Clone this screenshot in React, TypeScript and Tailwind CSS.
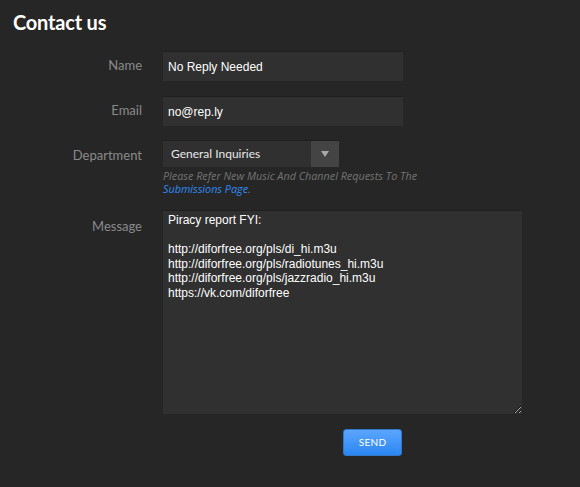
import React from "react";

const labelCls =
  "w-[142px] shrink-0 text-right text-[13px] text-[#8a8a8a] font-['Lato','Noto_Sans',sans-serif]";

const fieldCls =
  "ml-[21px] w-[240px] h-[30px] bg-[#303030] border-t border-[#1f1f1f] pl-[5px] text-[12px] text-white outline-none";

export default function App() {
  return (
    <div className="w-[580px] h-[487px] bg-[#262626] overflow-hidden font-['Liberation_Sans',Arial,sans-serif]">
      <h1 className="pl-[13px] pt-[10px] text-[20px] leading-[24px] font-bold text-white font-['Lato','Noto_Sans',sans-serif] tracking-[-0.2px]">
        Contact us
      </h1>

      <form className="mt-[17px] flex flex-col">
        <div className="flex items-center h-[30px]">
          <label className={labelCls}>Name</label>
          <input defaultValue="No Reply Needed" className={fieldCls} />
        </div>

        <div className="flex items-center h-[30px] mt-[15px]">
          <label className={labelCls}>Email</label>
          <input defaultValue="no@rep.ly" className={fieldCls} />
        </div>

        <div className="flex mt-[14px]">
          <label className={`${labelCls} pt-[6px]`}>Department</label>
          <div className="ml-[21px] flex flex-col">
            <div className="flex w-[176px] h-[27px] bg-[#303030] border-t border-[#1f1f1f]">
              <span className="flex-1 pl-[8px] leading-[26px] text-[12px] text-[#e8e8e8] font-['Lato','Noto_Sans',sans-serif]">
                General Inquiries
              </span>
              <span className="w-[28px] flex items-center justify-center bg-[#444444]">
                <svg width="8" height="6" viewBox="0 0 8 6">
                  <path d="M0 0h8L4 6z" fill="#a8a8a8" />
                </svg>
              </span>
            </div>
            <p className="mt-[3px] text-[10.8px] leading-[12.5px] italic text-[#747474] font-['Open_Sans','Noto_Sans',sans-serif]">
              Please Refer New Music And Channel Requests To The
              <br />
              <a className="text-[#2f8cf5]">Submissions Page</a>.
            </p>
          </div>
        </div>

        <div className="flex mt-[15px]">
          <label className={`${labelCls} pt-[7px]`}>Message</label>
          <textarea
            defaultValue={
              "Piracy report FYI:\n\nhttp://diforfree.org/pls/di_hi.m3u\nhttp://diforfree.org/pls/radiotunes_hi.m3u\nhttp://diforfree.org/pls/jazzradio_hi.m3u\nhttps://vk.com/diforfree"
            }
            className="ml-[21px] w-[359px] h-[204px] bg-[#303030] border-t border-[#1f1f1f] pl-[5px] pt-[2px] text-[12px] leading-[14.5px] text-white outline-none resize"
          />
        </div>

        <div className="flex mt-[15px] pl-[343px]">
          <button
            type="button"
            className="w-[59px] h-[27px] rounded-[3px] bg-gradient-to-b from-[#5aa6ff] to-[#2a86f2] border border-[#3278c8] text-[10px] text-white font-['Lato','Noto_Sans',sans-serif] tracking-[0.3px]"
          >
            SEND
          </button>
        </div>
      </form>
    </div>
  );
}
